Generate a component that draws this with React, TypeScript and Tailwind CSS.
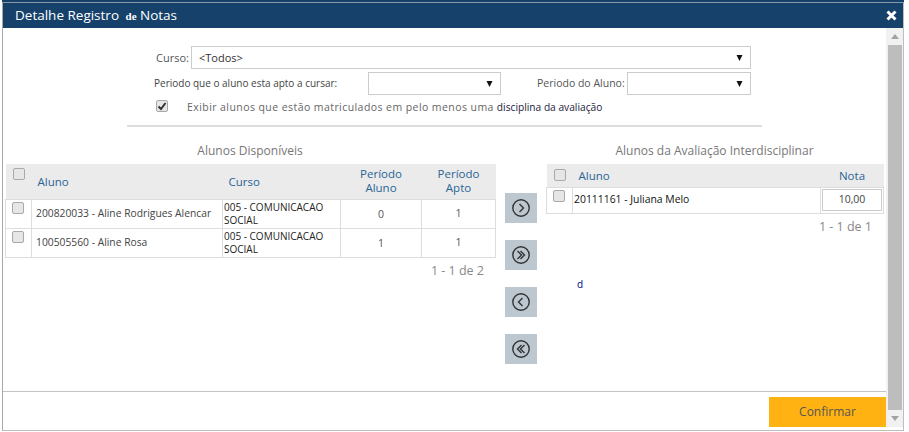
import { ReactNode } from "react";

const chk = "block w-[12px] h-[12px] rounded-[2px] border border-[#a9a9a9] bg-[#e6e6e6]";

function Check({ checked }: { checked?: boolean }) {
  return (
    <span className={chk + " flex items-center justify-center"}>
      {checked && (
        <svg width="10" height="10" viewBox="0 0 10 10">
          <path d="M1.5 5.5 L4 8 L8.5 2" fill="none" stroke="#333" strokeWidth="2" />
        </svg>
      )}
    </span>
  );
}

function Select({ className, children }: { className: string; children?: ReactNode }) {
  return (
    <div className={"flex items-center justify-between border border-[#cccccc] bg-white h-[23px] pl-[7px] pr-[7px] text-[11px] text-[#333] " + className}>
      <span className="pt-[2px]">{children}</span>
      <svg width="7" height="7" viewBox="0 0 7 7">
        <path d="M0.5 1 L6.5 1 L3.5 7 Z" fill="#111" />
      </svg>
    </div>
  );
}

function ArrowButton({ path }: { path: ReactNode }) {
  return (
    <div className="flex items-center justify-center w-[32px] h-[30px] bg-[#bdc7cf]">
      <svg width="20" height="20" viewBox="0 0 20 20" fill="none" stroke="#333" strokeWidth="1.4">
        <circle cx="10" cy="10" r="8.2" />
        {path}
      </svg>
    </div>
  );
}

const students = [
  { name: "200820033 - Aline Rodrigues Alencar", aluno: "0", apto: "1" },
  { name: "100505560 - Aline Rosa", aluno: "1", apto: "1" },
];

export default function App() {
  return (
    <div className="w-[909px] h-[432px] bg-white overflow-hidden text-[#555] font-['Open_Sans',sans-serif]">
      <div className="flex flex-col h-[431px] w-[902px] ml-[2px] border-l border-r border-b border-[#bdbdbd] border-l-[#a8a8a8]">
        <div className="h-[3px] -ml-[1px] -mr-[1px] bg-[#15416b] border-b border-[#8a9aa8]" />
        <div className="flex items-center justify-between h-[25px] bg-[#15416b] text-white text-[13.5px] pl-[12px] pr-[6px]">
          <span>
            Detalhe Registro <span className="ml-[3px] text-[11px] font-bold font-['Liberation_Serif',serif]">de</span> Notas
          </span>
          <svg width="11" height="11" viewBox="0 0 11 11">
            <path d="M1.5 1.5 L9.5 9.5 M9.5 1.5 L1.5 9.5" stroke="#fff" strokeWidth="3" />
          </svg>
        </div>

        <div className="flex flex-1 min-h-0">
          <div className="flex-1 flex flex-col min-w-0">
            <div className="flex-1 pt-[18px]">
              <div className="flex items-center h-[23px] ml-[153px]">
                <span className="text-[11px] w-[35px] pt-[2px]">Curso:</span>
                <Select className="w-[560px]">&lt;Todos&gt;</Select>
              </div>
              <div className="flex items-center h-[23px] mt-[3px] ml-[151px]">
                <span className="text-[10px] text-[#444] w-[214px]">Periodo que o aluno esta apto a cursar:</span>
                <Select className="w-[133px]" />
                <span className="text-[10.5px] ml-[36px] w-[90px]">Periodo do Aluno:</span>
                <Select className="w-[124px]" />
              </div>
              <div className="flex items-center h-[18px] mt-[2px] ml-[153px]">
                <Check checked />
                <span className="ml-[19px] pt-[4px] text-[10.5px] tracking-[0.43px] text-[#666]">Exibir alunos que estão matriculados em pelo menos uma</span>
                <span className="ml-[3px] pt-[4px] text-[10.2px] text-[#1a1a3a]">disciplina da avaliação</span>
              </div>
              <div className="h-[2px] bg-[#dddddd] w-[635px] ml-[124px] mt-[10px]" />

              <div className="flex mt-[15px] ml-[2px]">
                <div className="w-[490px]">
                  <div className="text-center text-[12px] h-[22px] text-[#777]">Alunos Disponíveis</div>
                  <table className="w-[490px] table-fixed border-collapse text-[10px]">
                    <colgroup>
                      <col className="w-[26px]" />
                      <col className="w-[191px]" />
                      <col className="w-[118px]" />
                      <col className="w-[81px]" />
                      <col className="w-[74px]" />
                    </colgroup>
                    <thead>
                      <tr className="h-[35px] bg-[#ebebeb] text-[#2a6496] text-[11.5px] font-normal leading-[14px]">
                        <th className="align-top pt-[4px] pl-[7px] font-normal"><Check /></th>
                        <th className="text-left pl-[6px] pt-[2px] font-normal">Aluno</th>
                        <th className="text-left pl-[6px] pt-[2px] font-normal">Curso</th>
                        <th className="font-normal">Período<br />Aluno</th>
                        <th className="font-normal">Período<br />Apto</th>
                      </tr>
                    </thead>
                    <tbody>
                      {students.map((s) => (
                        <tr key={s.name} className="h-[29px]">
                          <td className="border border-[#dddddd] align-top pt-[2px] pl-[6px]"><Check /></td>
                          <td className="border border-[#dddddd] pl-[4px] pt-[1px] text-[10.3px] text-[#444] whitespace-nowrap">{s.name}</td>
                          <td className="border border-[#dddddd] pl-[1px] text-[10px] leading-[13px] text-[#222]">005 - COMUNICACAO SOCIAL</td>
                          <td className="border border-[#dddddd] text-center pt-[2px] text-[10.5px]">{s.aluno}</td>
                          <td className="border border-[#dddddd] text-center text-[10.5px]">{s.apto}</td>
                        </tr>
                      ))}
                    </tbody>
                  </table>
                  <div className="text-right text-[12.5px] text-[#888] mt-[4px] pr-[11px]">1 - 1 de 2</div>
                </div>

                <div className="flex flex-col gap-[17px] w-[51px] pl-[10px] pt-[51px]">
                  <ArrowButton path={<path d="M8.5 6 L12.5 10 L8.5 14" />} />
                  <ArrowButton path={<path d="M6.5 6 L10.5 10 L6.5 14 M9.5 6 L13.5 10 L9.5 14" />} />
                  <ArrowButton path={<path d="M11.5 6 L7.5 10 L11.5 14" />} />
                  <ArrowButton path={<path d="M10.5 6 L6.5 10 L10.5 14 M13.5 6 L9.5 10 L13.5 14" />} />
                </div>

                <div className="w-[337px]">
                  <div className="text-center text-[12px] h-[22px] text-[#777]">Alunos da Avaliação Interdisciplinar</div>
                  <table className="w-[337px] table-fixed border-collapse text-[10px]">
                    <colgroup>
                      <col className="w-[26px]" />
                      <col className="w-[248px]" />
                      <col className="w-[63px]" />
                    </colgroup>
                    <thead>
                      <tr className="h-[23px] bg-[#ebebeb] text-[#2a6496] text-[11.5px]">
                        <th className="pl-[7px] font-normal"><Check /></th>
                        <th className="text-left pl-[6px] font-normal">Aluno</th>
                        <th className="font-normal">Nota</th>
                      </tr>
                    </thead>
                    <tbody>
                      <tr className="h-[26px]">
                        <td className="border border-[#dddddd] align-top pt-[2px] pl-[6px]"><Check /></td>
                        <td className="border border-[#dddddd] align-top pt-[4px] pl-[1px] text-[10.4px] text-[#111]">20111161 - Juliana Melo</td>
                        <td className="border border-[#dddddd] p-[1px]">
                          <div className="h-[22px] border border-[#cccccc] flex items-center justify-center text-[10.5px] text-[#444]">10,00</div>
                        </td>
                      </tr>
                    </tbody>
                  </table>
                  <div className="text-right text-[12.5px] text-[#888] mt-[4px] pr-[11px]">1 - 1 de 1</div>
                  <div className="mt-[41px] ml-[31px] text-[10px] text-[#00008b]">d</div>
                </div>
              </div>
            </div>
            <div className="h-[39px] border-t border-[#c4c4c4] flex justify-end items-start pt-[5px]">
              <button className="w-[117px] h-[30px] bg-[#ffb212] text-[12px] text-[#555]">Confirmar</button>
            </div>
          </div>

          <div className="w-[17px] h-[399px] bg-[#f1f1f1] flex flex-col items-center">
            <div className="h-[17px] flex items-center justify-center">
              <svg width="8" height="5" viewBox="0 0 8 5"><path d="M0 5 L4 0 L8 5 Z" fill="#a3a3a3" /></svg>
            </div>
            <div className="w-[14px] h-[365px] bg-[#bdbdbd]" />
            <div className="h-[17px] flex items-center justify-center">
              <svg width="8" height="5" viewBox="0 0 8 5"><path d="M0 0 L4 5 L8 0 Z" fill="#a3a3a3" /></svg>
            </div>
          </div>
        </div>
      </div>
    </div>
  );
}
